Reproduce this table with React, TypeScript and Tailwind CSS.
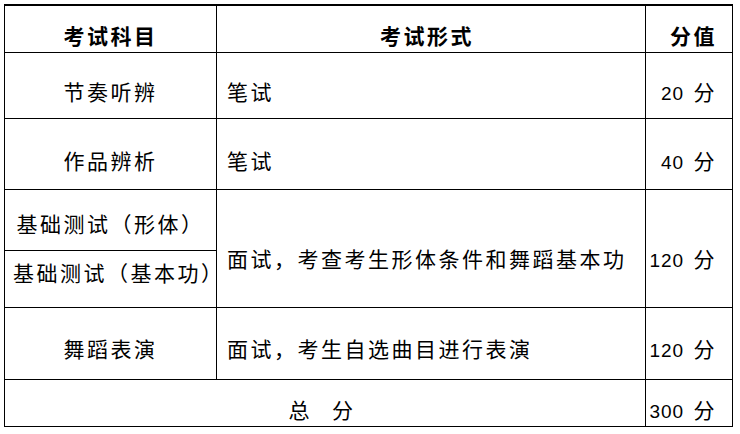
const rows = [
  { name: '节奏听辨', form: '笔试', score: '20' },
  { name: '作品辨析', form: '笔试', score: '40' },
]

function Score({ value }: { value: string }) {
  return (
    <span className="whitespace-pre">
      <span className="text-[19px] tracking-[1px]">{value}</span> <span className="ml-px">分</span>
    </span>
  )
}

export default function App() {
  return (
    <div className="w-[740px] h-[434px] bg-white pl-[4px] pt-[4px] text-black font-['Liberation_Sans','Noto_Sans_CJK_SC',sans-serif] text-[21px] tracking-[2.5px] leading-none">
      <div className="w-[729px] bg-black pt-[2px] px-px pb-px grid grid-cols-[211px_428px_86px] grid-rows-[46px_65px_70px_60px_56px_71px_46px] gap-px">
        {/* header */}
        <div className="bg-white flex items-center justify-center pt-[15px] font-bold">考试科目</div>
        <div className="bg-white flex items-center justify-center pt-[15px] pr-[8px] font-bold">考试形式</div>
        <div className="bg-white flex items-center justify-end pt-[15px] pr-[15px] font-bold">分值</div>

        {rows.map((r) => (
          <div key={r.name} className="contents">
            <div className="bg-white flex items-center justify-center pt-[14px]">{r.name}</div>
            <div className="bg-white flex items-center pl-[10px] pt-[14px]">{r.form}</div>
            <div className="bg-white flex items-center justify-end pr-[15px] pt-[14px]">
              <Score value={r.score} />
            </div>
          </div>
        ))}

        {/* 基础测试 */}
        <div className="bg-white flex items-center justify-center pt-[9px] whitespace-nowrap">基础测试（形体）</div>
        <div className="bg-white row-span-2 flex items-center pl-[10px] pt-[22px] whitespace-nowrap">
          面试，考查考生形体条件和舞蹈基本功
        </div>
        <div className="bg-white row-span-2 flex items-center justify-end pr-[15px] pt-[22px]">
          <Score value="120" />
        </div>
        <div className="bg-white flex items-center pl-[8px] pb-[11px] whitespace-nowrap">基础测试（基本功）</div>

        {/* 舞蹈表演 */}
        <div className="bg-white flex items-center justify-center pt-[12px]">舞蹈表演</div>
        <div className="bg-white flex items-center pl-[10px] pt-[12px] whitespace-nowrap">面试，考生自选曲目进行表演</div>
        <div className="bg-white flex items-center justify-end pr-[15px] pt-[12px]">
          <Score value="120" />
        </div>

        {/* 总分 */}
        <div className="bg-white col-span-2 flex items-center justify-center pt-[15px] pr-[6px]">
          <span>
            总<span className="inline-block w-[20px]" />分
          </span>
        </div>
        <div className="bg-white flex items-center justify-end pr-[15px] pt-[15px]">
          <Score value="300" />
        </div>
      </div>
    </div>
  )
}
